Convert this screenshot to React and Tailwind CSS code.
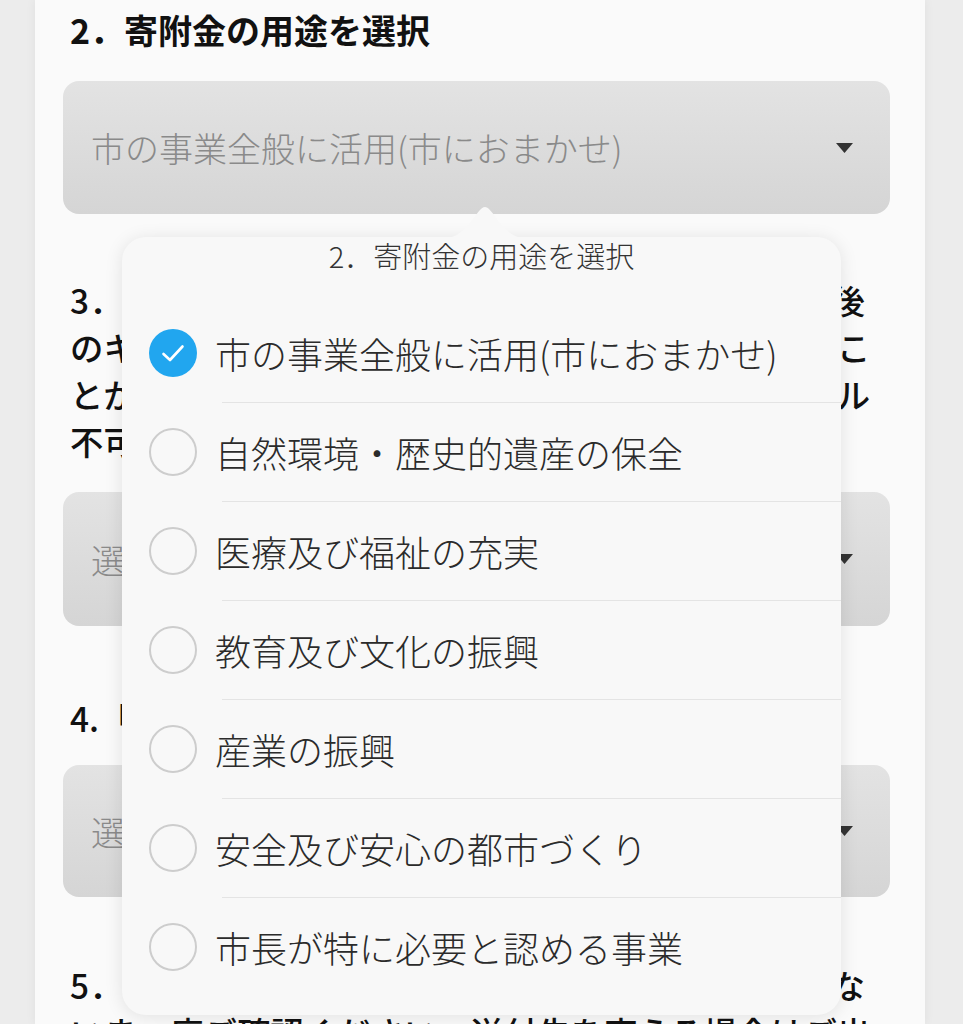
import React from "react";

const options = [
  "市の事業全般に活用(市におまかせ)",
  "自然環境・歴史的遺産の保全",
  "医療及び福祉の充実",
  "教育及び文化の振興",
  "産業の振興",
  "安全及び安心の都市づくり",
  "市長が特に必要と認める事業",
];

/* each line kept on its own row and stretched edge to edge like the original */
function JustifiedLines({ lines }) {
  return (
    <div className="w-[802px] pl-[7px] text-[33.4px] leading-[47px] font-medium text-[#111]">
      {lines.map((line, i) => (
        <div
          key={i}
          className={`whitespace-nowrap ${i < lines.length - 1 ? "text-justify [text-align-last:justify]" : ""}`}
        >
          {line}
        </div>
      ))}
    </div>
  );
}

function Caret() {
  return (
    <svg width="17" height="10" viewBox="0 0 17 10" className="shrink-0">
      <polygon points="0,0 17,0 8.5,10" fill="#333" />
    </svg>
  );
}

function SelectBox({ value, className = "" }) {
  return (
    <div
      className={`flex items-center justify-between rounded-[16px] bg-gradient-to-b from-[#e3e3e3] to-[#d5d5d5] pl-[28px] pr-[37px] ${className}`}
    >
      <span className="text-[34px] font-light text-[#8a8a8a] whitespace-nowrap">{value}</span>
      <Caret />
    </div>
  );
}

function Radio({ checked }) {
  if (checked) {
    return (
      <div className="flex h-[48px] w-[48px] shrink-0 items-center justify-center rounded-full bg-[#21a6ef]">
        <svg width="48" height="48" viewBox="0 0 48 48">
          <polyline
            points="14.5,25 21,31 33.5,17.5"
            fill="none"
            stroke="#fff"
            strokeWidth="2.6"
            strokeLinecap="round"
            strokeLinejoin="round"
          />
        </svg>
      </div>
    );
  }
  return <div className="h-[48px] w-[48px] shrink-0 rounded-full border-2 border-[#cdcdcd]" />;
}

function UsagePicker({ selected = 0 }) {
  return (
    <div className="absolute left-[87px] top-[237px] h-[778px] w-[719px] rounded-[24px] bg-[#f8f8f8] shadow-[0_2px_18px_rgba(0,0,0,0.10)]">
      {/* pointer towards the select */}
      <svg
        width="80"
        height="31"
        viewBox="0 0 80 31"
        className="absolute left-[323px] top-[-30px]"
      >
        <path d="M0 31 C 22 31, 32 0, 40 0 C 48 0, 58 31, 80 31 Z" fill="#f8f8f8" />
      </svg>

      <div className="h-[67px] text-center text-[29px] font-light leading-[36px] text-[#333]">
        2．寄附金の用途を選択
      </div>

      {options.map((opt, i) => (
        <div key={opt}>
          <div className="flex h-[98px] items-center gap-[18px] pl-[27px]">
            <Radio checked={i === selected} />
            <span className="whitespace-nowrap text-[36px] font-light leading-[44px] text-[#2b2b2b]">
              {opt}
            </span>
          </div>
          {i < options.length - 1 && <div className="ml-[100px] h-px bg-[#e4e4e4]" />}
        </div>
      ))}
    </div>
  );
}

export default function App() {
  return (
    <div
      className="h-screen overflow-hidden bg-[#ececec]"
      style={{ fontFamily: '"Noto Sans CJK JP", "Noto Sans", sans-serif' }}
    >
      <div className="relative ml-[35px] h-full w-[890px] bg-[#fafafa] pl-[28px] pr-[35px] pt-[6px] shadow-[0_0_10px_rgba(0,0,0,0.06)]">
        <h2 className="pl-[7px] text-[34px] font-bold leading-[48px] text-[#111]">
          2．寄附金の用途を選択
        </h2>
        <SelectBox value="市の事業全般に活用(市におまかせ)" className="mt-[27px] h-[133px]" />

        <div className="mt-[62px]">
          <JustifiedLines
            lines={[
              "3．ワンストップ特例申請書の送付について、申請後",
              "のキャンセルはできません。申請書を後日送付するこ",
              "とがありますので、必ずご確認ください。キャンセル",
              "不可となりますのでご注意ください。",
            ]}
          />
        </div>
        <SelectBox value="選択してください" className="mt-[28px] h-[134px]" />

        <div className="mt-[68px] pl-[7px] text-[33.4px] font-medium leading-[48px] text-[#111] whitespace-nowrap">
          4.「ワンストップ特例申請書」の送付
        </div>
        <SelectBox value="選択してください" className="mt-[23px] h-[132px]" />

        <div className="mt-[64px]">
          <JustifiedLines
            lines={[
              "5．お礼の品の送付先について寄附者と同じ住所でな",
              "いま一度ご確認ください。送付先を変える場合はご出",
              "力ください。",
            ]}
          />
        </div>

        <UsagePicker selected={0} />
      </div>
    </div>
  );
}
